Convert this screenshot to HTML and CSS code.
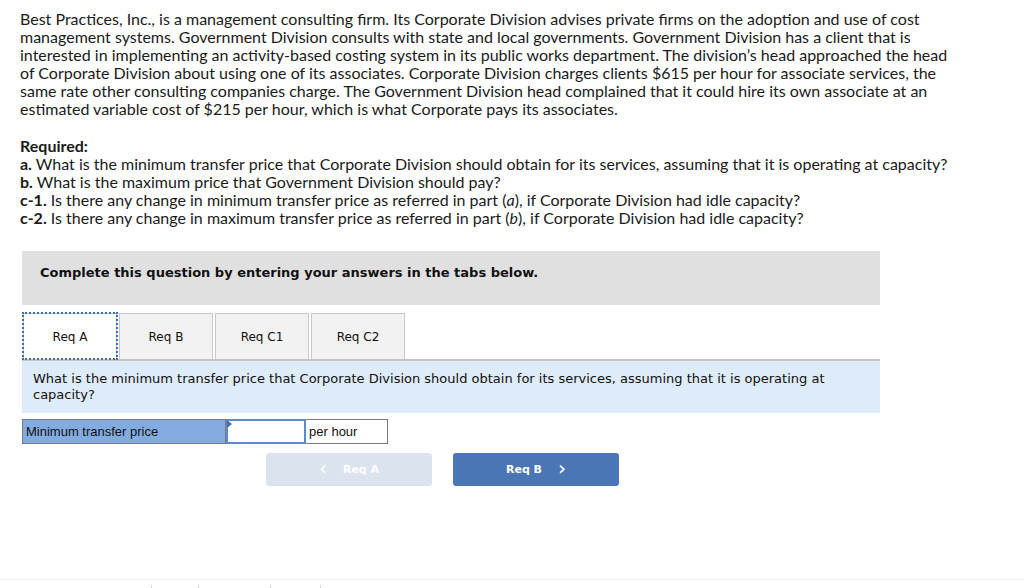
FILE: index.html
```html
<!DOCTYPE html>
<html>
<head>
<meta charset="utf-8">
<link rel="stylesheet" href="styles.css">
</head>
<body>
<div class="page">
  <p class="intro">Best Practices, Inc., is a management consulting firm. Its Corporate Division advises private firms on the adoption and use of cost<br>management systems. Government Division consults with state and local governments. Government Division has a client that is<br>interested in implementing an activity-based costing system in its public works department. The division’s head approached the head<br>of Corporate Division about using one of its associates. Corporate Division charges clients $615 per hour for associate services, the<br>same rate other consulting companies charge. The Government Division head complained that it could hire its own associate at an<br>estimated variable cost of $215 per hour, which is what Corporate pays its associates.</p>
  <div class="required">
    <div class="req-title">Required:</div>
    <div><b>a.</b> What is the minimum transfer price that Corporate Division should obtain for its services, assuming that it is operating at capacity?</div>
    <div><b>b.</b> What is the maximum price that Government Division should pay?</div>
    <div><b>c-1.</b> Is there any change in minimum transfer price as referred in part (<i>a</i>), if Corporate Division had idle capacity?</div>
    <div><b>c-2.</b> Is there any change in maximum transfer price as referred in part (<i>b</i>), if Corporate Division had idle capacity?</div>
  </div>
  <div class="widget">
    <div class="banner">Complete this question by entering your answers in the tabs below.</div>
    <div class="tabs">
      <div class="tab active">Req A</div>
      <div class="tab">Req B</div>
      <div class="tab">Req C1</div>
      <div class="tab">Req C2</div>
    </div>
    <div class="question">What is the minimum transfer price that Corporate Division should obtain for its services, assuming that it is operating at capacity?</div>
    <div class="answer-row">
      <div class="label-cell">Minimum transfer price</div>
      <div class="input-cell"><span class="flag"></span></div>
      <div class="unit-cell">per hour</div>
    </div>
    <div class="nav">
      <div class="btn prev"><span class="chev">&lsaquo;</span><span>Req A</span></div>
      <div class="btn next"><span>Req B</span><span class="chev">&rsaquo;</span></div>
    </div>
  </div>
</div>
<div class="footer">
  <span class="tick"></span><span class="tick"></span><span class="tick"></span><span class="tick"></span>
</div>
</body>
</html>
```

FILE: styles.css
```css
html, body {
  margin: 0;
  padding: 0;
  background: #ffffff;
}
.page {
  padding: 10px 0 0 20px;
  height: 579px;
  box-sizing: border-box;
  font-family: "Lato", "Liberation Sans", sans-serif;
  color: #1a1a1a;
}
.intro {
  margin: 0;
  font-size: 16px;
  line-height: 18px;
  white-space: nowrap;
}
.required {
  margin-top: 19px;
  font-size: 16px;
  line-height: 18px;
  white-space: nowrap;
}
.req-title { font-weight: 700; }
.required b { font-weight: 700; }
.widget {
  margin-top: 24px;
  margin-left: 2px;
  width: 858px;
  font-family: "DejaVu Sans", Verdana, sans-serif;
}
.banner {
  background: #e0e0e0;
  height: 54px;
  box-sizing: border-box;
  padding: 14px 0 0 18px;
  font-size: 13px;
  font-weight: 700;
  line-height: 16px;
  color: #111;
}
.tabs {
  display: flex;
  gap: 2px;
  margin-top: 8px;
  border-bottom: 2px solid #c4c4c4;
  padding-left: 1px;
}
.tab {
  width: 94px;
  height: 46px;
  box-sizing: border-box;
  border: 1px solid #c8c8c8;
  border-bottom: none;
  background: #f2f2f2;
  font-size: 12px;
  display: flex;
  align-items: center;
  justify-content: center;
  color: #111;
}
.tab.active {
  background: #ffffff;
  outline: 2px dotted #3a6fb5;
  outline-offset: -1px;
}
.question {
  background: #deebf8;
  height: 52px;
  box-sizing: border-box;
  padding: 10px 40px 0 11px;
  font-size: 13px;
  line-height: 16px;
  color: #111;
}
.answer-row {
  display: flex;
  margin-top: 6px;
  height: 25px;
  font-family: "Liberation Sans", Arial, sans-serif;
  font-size: 13px;
  color: #111;
}
.label-cell {
  width: 204px;
  box-sizing: border-box;
  background: #84abe0;
  border: 1px solid #7a7a7a;
  padding: 4px 0 0 3px;
}
.input-cell {
  position: relative;
  width: 80px;
  box-sizing: border-box;
  background: #fff;
  border: 2px solid #5c8ace;
}
.flag {
  position: absolute;
  top: -1px;
  left: -1px;
  width: 0;
  height: 0;
  border-top: 4px solid transparent;
  border-bottom: 4px solid transparent;
  border-left: 5px solid #3f6fb8;
}
.unit-cell {
  width: 82px;
  box-sizing: border-box;
  border: 1px solid #7a7a7a;
  border-left: none;
  padding: 4px 0 0 3px;
  background: #fff;
}
.nav {
  display: flex;
  gap: 21px;
  margin-top: 9px;
  margin-left: 244px;
}
.btn {
  width: 166px;
  height: 33px;
  box-sizing: border-box;
  border-radius: 3px;
  display: flex;
  align-items: center;
  justify-content: center;
  gap: 16px;
  font-size: 11px;
  font-weight: 700;
  color: #fff;
}
.btn .chev {
  font-size: 20px;
  font-weight: 400;
  line-height: 1;
  margin-top: -3px;
}
.prev { background: #dae3ee; }
.next { background: #4a76b5; }
.footer {
  height: 9px;
  border-top: 1px solid #efefef;
  display: flex;
}
.tick {
  display: block;
  width: 1px;
  height: 3px;
  background: #d8d8d8;
  margin-top: 5px;
}
.tick:nth-child(1) { margin-left: 151px; }
.tick:nth-child(2) { margin-left: 46px; }
.tick:nth-child(3) { margin-left: 71px; }
.tick:nth-child(4) { margin-left: 49px; }
```
